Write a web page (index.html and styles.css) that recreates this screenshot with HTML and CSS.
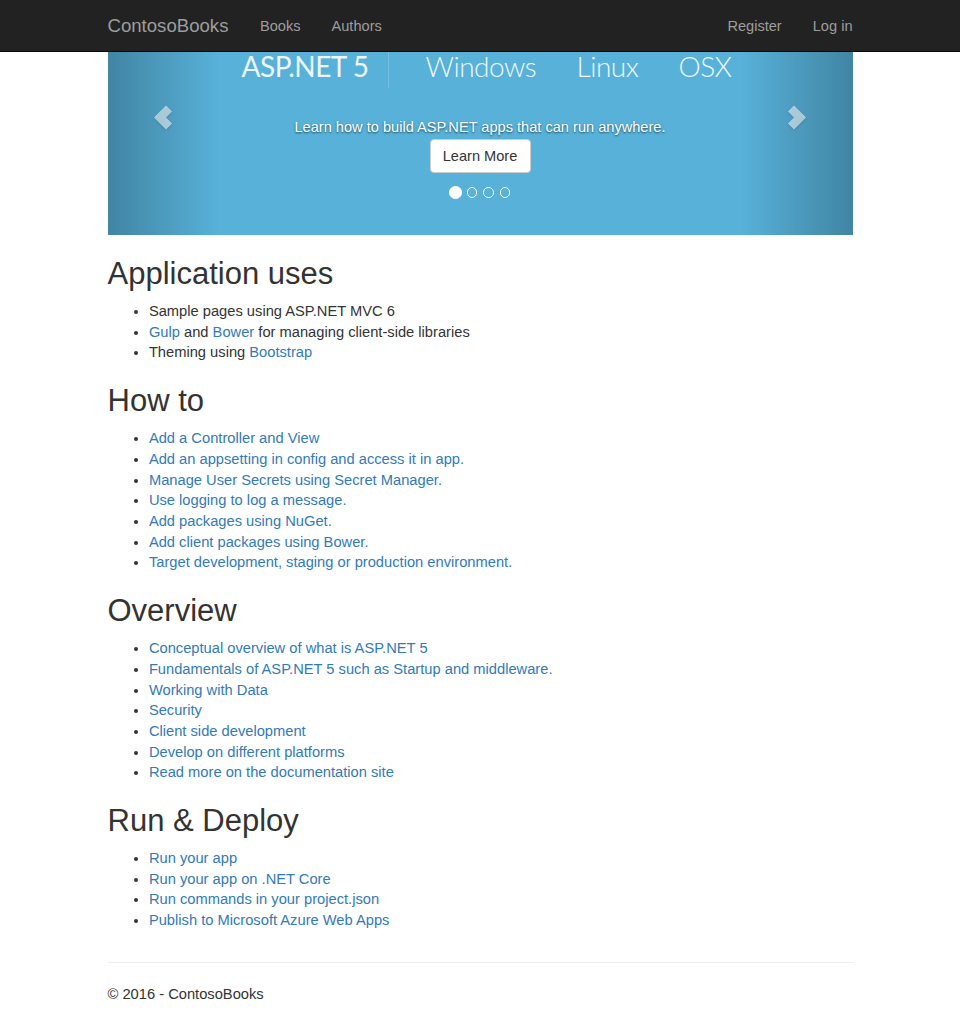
FILE: index.html
```html
<!DOCTYPE html>
<html lang="en">
<head>
<meta charset="utf-8">
<title>ContosoBooks</title>
<link rel="stylesheet" href="styles.css">
</head>
<body>
<header class="navbar">
  <div class="container nav-inner">
    <div class="nav-left">
      <a class="brand" href="#">ContosoBooks</a>
      <a class="nav-link" href="#">Books</a>
      <a class="nav-link" href="#">Authors</a>
    </div>
    <div class="nav-right">
      <a class="nav-link" href="#">Register</a>
      <a class="nav-link last" href="#">Log in</a>
    </div>
  </div>
</header>

<main class="container">
  <section class="carousel">
    <div class="banner">
      <span class="b-item b-asp">ASP.NET 5</span>
      <span class="b-item b-win">Windows</span>
      <span class="b-item b-lin">Linux</span>
      <span class="b-item b-osx">OSX</span>
    </div>
    <p class="caption">Learn how to build ASP.NET apps that can run anywhere.</p>
    <a class="btn" href="#">Learn More</a>
    <ol class="indicators">
      <li class="dot active"></li>
      <li class="dot"></li>
      <li class="dot"></li>
      <li class="dot"></li>
    </ol>
    <a class="control left" href="#" aria-label="Previous">
      <svg class="chev" width="20" height="27" viewBox="0 0 20 27"><polygon points="1,13.5 13,1.5 19,7.5 13,13.5 19,19.5 13,25.5"/></svg>
    </a>
    <a class="control right" href="#" aria-label="Next">
      <svg class="chev" width="20" height="27" viewBox="0 0 20 27"><polygon points="19,13.5 7,1.5 1,7.5 7,13.5 1,19.5 7,25.5"/></svg>
    </a>
  </section>

  <h2>Application uses</h2>
  <ul>
    <li>Sample pages using ASP.NET MVC 6</li>
    <li><a href="#">Gulp</a> and <a href="#">Bower</a> for managing client-side libraries</li>
    <li>Theming using <a href="#">Bootstrap</a></li>
  </ul>

  <h2>How to</h2>
  <ul>
    <li><a href="#">Add a Controller and View</a></li>
    <li><a href="#">Add an appsetting in config and access it in app.</a></li>
    <li><a href="#">Manage User Secrets using Secret Manager.</a></li>
    <li><a href="#">Use logging to log a message.</a></li>
    <li><a href="#">Add packages using NuGet.</a></li>
    <li><a href="#">Add client packages using Bower.</a></li>
    <li><a href="#">Target development, staging or production environment.</a></li>
  </ul>

  <h2>Overview</h2>
  <ul>
    <li><a href="#">Conceptual overview of what is ASP.NET 5</a></li>
    <li><a href="#">Fundamentals of ASP.NET 5 such as Startup and middleware.</a></li>
    <li><a href="#">Working with Data</a></li>
    <li><a href="#">Security</a></li>
    <li><a href="#">Client side development</a></li>
    <li><a href="#">Develop on different platforms</a></li>
    <li><a href="#">Read more on the documentation site</a></li>
  </ul>

  <h2>Run &amp; Deploy</h2>
  <ul>
    <li><a href="#">Run your app</a></li>
    <li><a href="#">Run your app on .NET Core</a></li>
    <li><a href="#">Run commands in your project.json</a></li>
    <li><a href="#">Publish to Microsoft Azure Web Apps</a></li>
  </ul>

  <hr class="rule">
  <footer class="footer">
    <p>&copy; 2016 - ContosoBooks</p>
  </footer>
</main>
</body>
</html>
```

FILE: styles.css
```css
* { box-sizing: border-box; }

html, body {
  margin: 0;
  padding: 0;
}

body {
  font-family: "Liberation Sans", Arial, Helvetica, sans-serif;
  font-size: 14.7px;
  line-height: 20.7px;
  color: #333;
  background: #fff;
}

a {
  color: #337ab7;
  text-decoration: none;
}

.container {
  width: 745px;
  margin: 0 auto;
}

/* Navbar */
.navbar {
  height: 52px;
  background: #222;
  border-bottom: 1px solid #080808;
}

.nav-inner {
  display: flex;
  justify-content: space-between;
  align-items: center;
  height: 51px;
}

.nav-left, .nav-right {
  display: flex;
  align-items: center;
}

.brand {
  color: #9d9d9d;
  font-size: 18.6px;
  line-height: 20px;
  padding-right: 16px;
}

.nav-link {
  color: #9d9d9d;
  font-size: 14.6px;
  line-height: 20px;
  padding: 0 15.5px;
}

.nav-link.last {
  padding-right: 0;
}

/* Carousel */
.carousel {
  position: relative;
  height: 183px;
  background: #57b1d9;
  display: flex;
  flex-direction: column;
  align-items: center;
  margin-bottom: 21.7px;
}

.banner {
  display: flex;
  align-self: stretch;
  padding-left: 134px;
  height: 36px;
  font-family: "Lato Light", Lato, "Open Sans", sans-serif;
  font-weight: 300;
  font-size: 28px;
  letter-spacing: -0.5px;
  line-height: 28px;
  color: #eef7fb;
}

.b-item {
  display: block;
  height: 36px;
  white-space: nowrap;
}

.b-asp {
  width: 147px;
  font-family: Lato, "Open Sans", sans-serif;
  font-weight: 400;
  border-right: 1px solid rgba(255, 255, 255, 0.18);
}

.b-win {
  width: 151px;
  margin-left: 37px;
}

.b-lin {
  width: 102px;
}

.caption {
  margin: 29px 0 0;
  color: #fff;
  font-size: 14.6px;
  line-height: 21px;
  text-shadow: 0 1px 2px rgba(0, 0, 0, 0.6);
}

.btn {
  display: flex;
  align-items: center;
  justify-content: center;
  width: 101px;
  height: 34px;
  margin-top: 1px;
  background: #fff;
  color: #333;
  border: 1px solid #ccc;
  border-radius: 4px;
  font-size: 14.6px;
}

.indicators {
  display: flex;
  align-items: center;
  list-style: none;
  margin: 13px 0 0;
  padding: 0;
}

.dot {
  width: 10.5px;
  height: 10.5px;
  margin: 0 3px;
  border: 1px solid #fff;
  border-radius: 50%;
}

.dot.active {
  width: 12.5px;
  height: 12.5px;
  margin: 0 2px;
  background: #fff;
}

.control {
  position: absolute;
  top: 0;
  bottom: 0;
  width: 15%;
  display: flex;
  justify-content: center;
  align-items: flex-start;
  padding-top: 52px;
}

.control.left {
  left: 0;
  background: linear-gradient(to right, rgba(0, 0, 0, 0.25), rgba(0, 0, 0, 0));
}

.control.right {
  right: 0;
  background: linear-gradient(to left, rgba(0, 0, 0, 0.25), rgba(0, 0, 0, 0));
}

.chev {
  display: block;
  fill: rgba(255, 255, 255, 0.55);
  filter: drop-shadow(0 1px 1px rgba(0, 0, 0, 0.25));
}

/* Content */
h2 {
  font-family: "Liberation Sans", Arial, Helvetica, sans-serif;
  font-weight: 400;
  font-size: 31px;
  line-height: 34px;
  color: #333;
  margin: 20.7px 0 10.35px;
}

ul {
  margin: 0 0 10.35px;
  padding-left: 41.4px;
}

.rule {
  border: 0;
  border-top: 1px solid #eee;
  margin: 31px 0 20.7px;
  height: 0;
}

.footer p {
  margin: 0 0 10.35px;
}
```
